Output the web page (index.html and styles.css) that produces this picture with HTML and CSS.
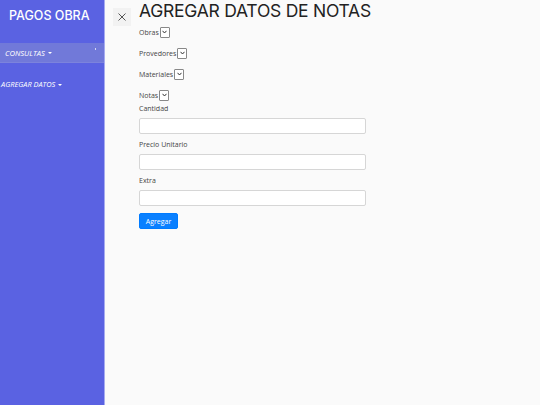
FILE: index.html
```html
<!DOCTYPE html>
<html lang="es">
<head>
<meta charset="utf-8">
<title>Pagos Obra</title>
<link rel="stylesheet" href="styles.css">
</head>
<body>
<div class="wrapper">
  <nav class="sidebar">
    <div class="sidebar-header">PAGOS OBRA</div>
    <ul class="menu">
      <li class="menu-item active"><span class="menu-link consultas">CONSULTAS <span class="caret"></span></span><span class="dot"></span></li>
      <li class="menu-item"><span class="menu-link agregar">AGREGAR DATOS <span class="caret"></span></span></li>
    </ul>
  </nav>
  <main class="content">
    <button class="close-btn" aria-label="Cerrar">
      <svg width="10" height="10" viewBox="0 0 10 10"><path d="M1.5 1.5L8.5 8.5M8.5 1.5L1.5 8.5" stroke="#555" stroke-width="1" fill="none"/></svg>
    </button>
    <div class="form-area">
      <h1 class="title">AGREGAR DATOS DE NOTAS</h1>
      <div class="sel-row first"><label>Obras</label><span class="select"><svg width="5" height="4" viewBox="0 0 5 4"><path d="M0.5 0.8L2.5 3L4.5 0.8" stroke="#333" stroke-width="1" fill="none"/></svg></span></div>
      <div class="sel-row"><label>Provedores</label><span class="select"><svg width="5" height="4" viewBox="0 0 5 4"><path d="M0.5 0.8L2.5 3L4.5 0.8" stroke="#333" stroke-width="1" fill="none"/></svg></span></div>
      <div class="sel-row"><label>Materiales</label><span class="select"><svg width="5" height="4" viewBox="0 0 5 4"><path d="M0.5 0.8L2.5 3L4.5 0.8" stroke="#333" stroke-width="1" fill="none"/></svg></span></div>
      <div class="sel-row"><label>Notas</label><span class="select"><svg width="5" height="4" viewBox="0 0 5 4"><path d="M0.5 0.8L2.5 3L4.5 0.8" stroke="#333" stroke-width="1" fill="none"/></svg></span></div>
      <div class="field first"><label>Cantidad</label><input class="input" type="text"></div>
      <div class="field"><label>Precio Unitario</label><input class="input" type="text"></div>
      <div class="field"><label>Extra</label><input class="input" type="text"></div>
      <button class="btn">Agregar</button>
    </div>
  </main>
</div>
</body>
</html>
```
FILE: styles.css
```css
html, body {
  margin: 0;
  padding: 0;
  height: 100%;
}
body {
  font-family: "Open Sans", "Liberation Sans", sans-serif;
  background: #fafafa;
  color: #333;
}
.wrapper {
  display: flex;
  min-height: 405px;
}
.sidebar {
  width: 105px;
  flex: 0 0 105px;
  background: #5a62e2;
  border-right: 1px solid #a6abf0;
  box-sizing: border-box;
  color: #fff;
}
.sidebar-header {
  font-family: Inter, "Open Sans", sans-serif;
  font-size: 12.5px;
  font-weight: 500;
  padding: 8px 0 0 9px;
  height: 35px;
  box-sizing: border-box;
}
.menu {
  list-style: none;
  margin: 8px 0 0;
  padding: 0;
}
.menu-item {
  position: relative;
  height: 19px;
  display: flex;
  align-items: center;
  font-size: 7.6px;
  font-style: italic;
  border-bottom: 1px solid rgba(255,255,255,0.08);
}
.menu-item.active {
  background: #7179d9;
}
.menu-item + .menu-item {
  margin-top: 11px;
  border-bottom: none;
}
.menu-link.consultas {
  padding-left: 5px;
}
.menu-link.agregar {
  padding-left: 1px;
  font-size: 7.4px;
}
.caret {
  display: inline-block;
  width: 0;
  height: 0;
  border-left: 2.5px solid transparent;
  border-right: 2.5px solid transparent;
  border-top: 2.5px solid #fff;
  vertical-align: middle;
  margin-left: 1px;
}
.dot {
  position: absolute;
  right: 8px;
  top: 5px;
  width: 1px;
  height: 2px;
  background: rgba(255,255,255,0.7);
}
.content {
  flex: 1;
  display: flex;
  align-items: flex-start;
  padding: 0 0 0 8px;
}
.close-btn {
  width: 18px;
  height: 18px;
  margin-top: 8px;
  border: none;
  background: #f2f2f2;
  padding: 0;
  display: flex;
  align-items: center;
  justify-content: center;
}
.form-area {
  margin-left: 8px;
}
.title {
  font-family: Inter, "Open Sans", sans-serif;
  font-size: 17.5px;
  font-weight: 400;
  color: #222;
  margin: 0;
  line-height: 21px;
  letter-spacing: -0.25px;
  white-space: nowrap;
}
.sel-row {
  display: flex;
  align-items: center;
  height: 12px;
  margin-top: 9px;
  font-size: 7px;
  color: #444;
}
.sel-row.first {
  margin-top: 5px;
}
.sel-row label {
  margin-right: 1px;
}
.select {
  width: 8px;
  height: 9px;
  border: 1px solid #888;
  border-radius: 1px;
  background: #fff;
  display: inline-flex;
  align-items: center;
  justify-content: center;
}
.field {
  display: flex;
  flex-direction: column;
  align-items: flex-start;
  font-size: 7px;
  color: #444;
}
.field label {
  height: 9px;
  line-height: 9px;
  margin-top: 1px;
  margin-bottom: 5px;
}
.field.first label {
  margin-top: 3px;
}
.input {
  width: 227px;
  height: 16px;
  box-sizing: border-box;
  border: 1px solid #d6d6d6;
  border-radius: 2px;
  background: #fff;
  padding: 0;
  margin: 0 0 5px;
}
.btn {
  display: block;
  margin-top: 2px;
  width: 39px;
  height: 16px;
  background: #0a80ff;
  color: #fff;
  border: 1px solid #007bff;
  border-radius: 2px;
  font-family: inherit;
  font-size: 7px;
  padding: 0;
}
```
